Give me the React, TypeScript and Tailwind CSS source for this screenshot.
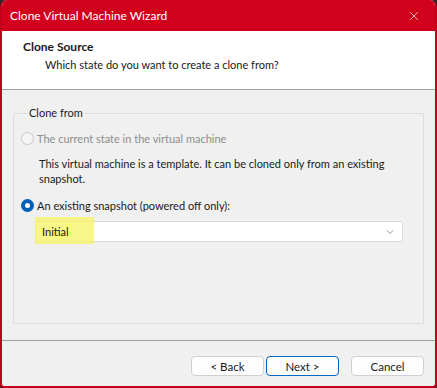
import { X, ChevronDown } from "lucide-react";

// ===== COMPONENTS =====
function Radio({ checked, disabled }: { checked?: boolean; disabled?: boolean }) {
  if (checked) {
    return (
      <span className="w-[13px] h-[13px] rounded-full bg-[#005fb8] flex items-center justify-center shrink-0">
        <span className="w-[5px] h-[5px] rounded-full bg-white" />
      </span>
    );
  }
  return (
    <span
      className={`w-[13px] h-[13px] rounded-full border shrink-0 ${
        disabled ? "border-[#c6c6c6] bg-[#f5f5f5]" : "border-[#333] bg-white"
      }`}
    />
  );
}

function WizardButton({ label, primary }: { label: string; primary?: boolean }) {
  return (
    <button
      className={`w-[73px] h-[20px] rounded-[4px] bg-[#fdfdfd] text-[11.5px] text-[#1a1a1a] flex items-center justify-center border ${
        primary ? "border-[#0067c0]" : "border-[#d0d0d0]"
      }`}
    >
      {label}
    </button>
  );
}

// ===== MAIN =====
export default function App() {
  return (
    <div
      className="w-[437px] h-[388px] bg-[#2a2a2a] text-[11px] leading-[15px] text-[#1a1a1a]"
      style={{ fontFamily: "Lato, 'Noto Sans', sans-serif" }}
    >
      <div className="w-full h-full flex flex-col rounded-t-[7px] rounded-b-[4px] overflow-hidden border-x-2 border-b-2 border-[#c4001a] bg-[#f0f0f0]">
        {/* TITLE BAR */}
        <div className="h-[31px] -mx-[2px] bg-[#d1001c] flex items-center justify-between pl-[10px] pr-[16px] text-white shrink-0">
          <span className="text-[12px]">Clone Virtual Machine Wizard</span>
          <X size={14} strokeWidth={1.2} />
        </div>

        {/* HEADER */}
        <div className="h-[59px] bg-white border-b border-[#a0a0a0] pt-[8px] pl-[21px] shrink-0">
          <p className="font-bold text-[12px] leading-[16px]">Clone Source</p>
          <p className="ml-[22px] mt-[2px]">Which state do you want to create a clone from?</p>
        </div>

        {/* BODY */}
        <div className="flex-1 flex flex-col">
          <fieldset className="mt-[15px] mx-[11px] h-[219px] border border-[#dcdcdc] rounded-[1px] px-[7px]">
            <legend className="ml-[6px] px-[2px] leading-[16px]">Clone from</legend>

            <div className="flex items-center gap-[3px] mt-[10px] text-[#8d8d8d]">
              <Radio disabled />
              <span>The current state in the virtual machine</span>
            </div>

            <p className="ml-[18px] mt-[10px] pr-[20px]">
              This virtual machine is a template. It can be cloned only from an existing snapshot.
            </p>

            <div className="flex items-center gap-[3px] mt-[12px]">
              <Radio checked />
              <span>An existing snapshot (powered off only):</span>
            </div>

            <div className="relative ml-[14px] mr-[13px] mt-[8px] h-[21px] bg-white border border-[#d9d9d9] rounded-[3px] flex items-center justify-between pl-[6px] pr-[6px]">
              <span className="absolute -left-px -top-[5px] w-[59px] h-[27px] bg-[#f6f46a]/80" />
              <span className="relative">Initial</span>
              <ChevronDown size={12} strokeWidth={1.2} className="text-[#555]" />
            </div>
          </fieldset>

          <div className="mt-[16px] border-t border-[#a0a0a0]" />

          <div className="flex justify-end items-center pt-[15px] pr-[11px]">
            <WizardButton label="< Back" />
            <div className="w-[2px]" />
            <WizardButton label="Next >" primary />
            <div className="w-[12px]" />
            <WizardButton label="Cancel" />
          </div>
        </div>
      </div>
    </div>
  );
}
